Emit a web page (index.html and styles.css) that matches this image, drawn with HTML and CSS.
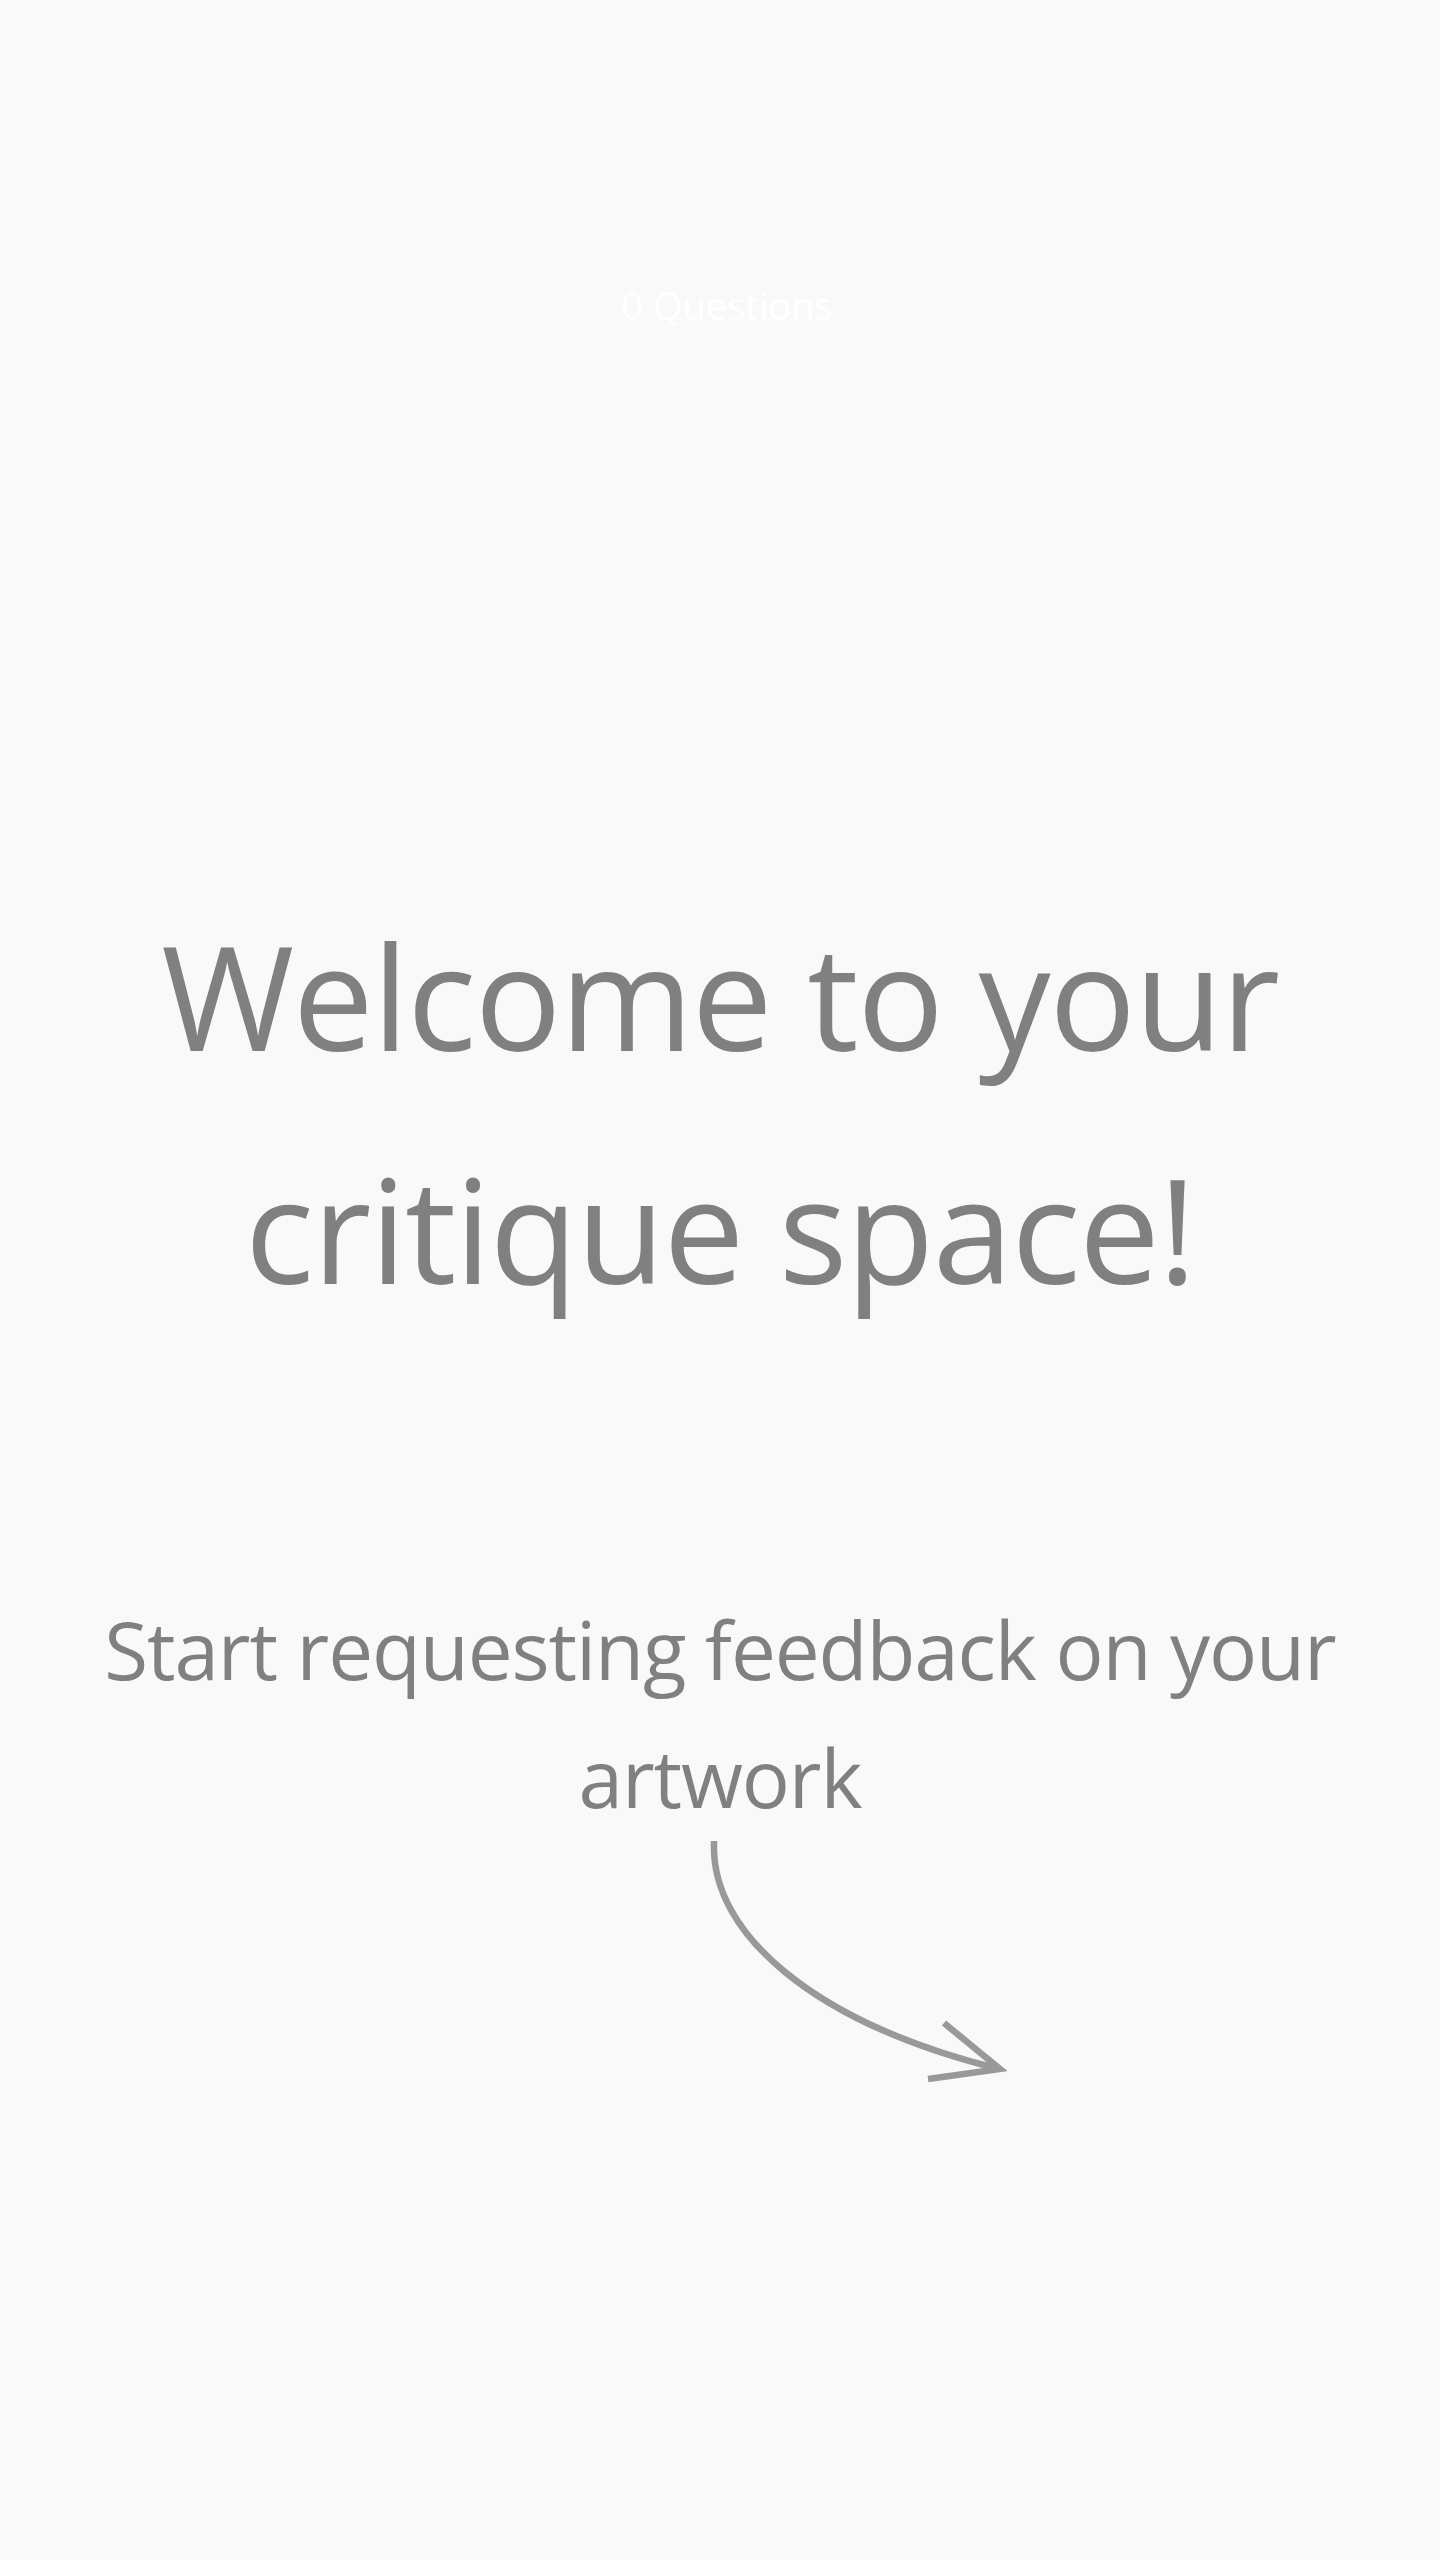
FILE: index.html
```html
<!DOCTYPE html>
<html lang="en">
<head>
<meta charset="utf-8">
<title>Critique space</title>
<link rel="stylesheet" href="styles.css">
</head>
<body>
<main class="page">
  <div class="count">0 Questions</div>
  <h1 class="welcome">Welcome to your<br>critique space!</h1>
  <p class="sub">Start requesting feedback on your<br>artwork</p>
  <svg class="arrow" width="300" height="250" viewBox="0 0 300 250" aria-hidden="true">
    <path d="M7,0 L7,7 C7,90 100,180 292,228" fill="none" stroke="#999999" stroke-width="6.5"/>
    <path d="M237,182 L293,228 L221,238" fill="none" stroke="#999999" stroke-width="6.5"/>
  </svg>
</main>
</body>
</html>
```

FILE: styles.css
```css
html, body {
  margin: 0;
  padding: 0;
  background: #f9f9f9;
}
body {
  font-family: "Open Sans", "Noto Sans", "DejaVu Sans", sans-serif;
  color: #808080;
}
.page {
  display: flex;
  flex-direction: column;
  align-items: center;
  text-align: center;
  padding-top: 277px;
  min-height: 2560px;
  box-sizing: border-box;
}
.count {
  font-size: 38px;
  line-height: 57px;
  color: #ffffff;
  margin-left: 14px;
}
.welcome {
  margin: 545px 0 0 0;
  font-size: 144px;
  font-weight: 400;
  line-height: 233px;
  letter-spacing: -1.4px;
}
.sub {
  margin: 240px 0 0 0;
  font-size: 80px;
  line-height: 128px;
  letter-spacing: -1.1px;
}
.arrow {
  display: block;
  margin-left: 274px;
}
```
